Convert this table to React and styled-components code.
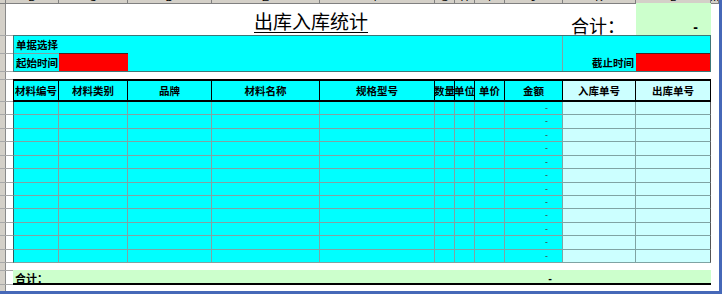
import styled, { createGlobalStyle } from "styled-components";

const GlobalStyle = createGlobalStyle`
  html, body {
    margin: 0;
    padding: 0;
    background: #ffffff;
  }
  body {
    font-family: "Noto Sans CJK SC", "Noto Sans", sans-serif;
    color: #000;
  }
`;

// column widths of the sheet, starting at the table's left edge
const WIDTHS = [46, 69, 84, 108, 115, 20, 20, 30, 58, 73, 75];
const TABLE_COLS = WIDTHS.map((w) => w + "px").join(" ");
const HEADERS = ["材料编号", "材料类别", "品牌", "材料名称", "规格型号", "数量", "单位", "单价", "金额", "入库单号", "出库单号"];
const ROW_HEIGHTS = [13, 14, 13, 14, 13, 14, 13, 13, 14, 13, 14, 13];
const HEAD_HEIGHTS = [32, 18, 18, 8, 22, ...ROW_HEIGHTS, 8, 14];
const LETTERS = ["", "B", "C", "D", "E", "F", "G", "H", "I", "J", "K", "L", "M"];

const CYAN = "#00ffff";
const LIGHT_CYAN = "#ccffff";
const LIGHT_GREEN = "#ccffcc";
const GRID = "#7fa3a3";

const Window = styled.div`
    width: 722px;
    height: 294px;
    box-sizing: border-box;
    border-right: 3px solid #4668b8;
    border-bottom: 3px solid #4668b8;
    display: flex;
    flex-direction: column;
    overflow: hidden;
    background: #fff;
`

const ColStrip = styled.div`
    display: grid;
    grid-template-columns: 6px 53px ${WIDTHS.slice(1).map((w) => w + "px").join(" ")} 1fr;
    height: 4px;
    flex-shrink: 0;
    box-sizing: border-box;
    border-bottom: 1px solid #808080;
    background: #d4d0c8;
`

const ColLetter = styled.div`
    display: flex;
    align-items: flex-end;
    justify-content: center;
    overflow: hidden;
    border-right: 1px solid #808080;
    font: 11px/11px "Liberation Sans", sans-serif;
    color: #000;
`

const Body = styled.div`
    display: flex;
    flex: 1;
    min-height: 0;
`

const RowHeads = styled.div`
    display: flex;
    flex-direction: column;
    width: 13px;
    flex-shrink: 0;
`

const RowHead = styled.div`
    height: ${(p) => (p.$h ? p.$h + "px" : "auto")};
    flex: ${(p) => (p.$h ? "none" : "1")};
    box-sizing: border-box;
    border-bottom: ${(p) => (p.$h ? "1px solid #a8a8a8" : "none")};
    background: linear-gradient(to right, #d4d0c8 0 5px, #8a8a8a 5px 6px, #ffffff 6px);
`

const Sheet = styled.div`
    display: flex;
    flex-direction: column;
    width: 698px;
`

const TitleBar = styled.div`
    display: grid;
    grid-template-columns: ${TABLE_COLS};
    height: 31px;
    flex-shrink: 0;
`

const Title = styled.div`
    grid-column: 4 / span 2;
    padding: 7px 0 0 42px;
    font-size: 19px;
    line-height: 19px;
    white-space: nowrap;
    text-decoration: underline;
    text-underline-offset: 3px;
    text-decoration-thickness: 1px;
`

const SumLabel = styled.div`
    grid-column: 10;
    padding: 12px 0 0 8px;
    font-size: 18px;
    line-height: 18px;
    white-space: nowrap;
    text-decoration: underline;
    text-underline-offset: 3px;
    text-decoration-thickness: 1px;
`

const SumBox = styled.div`
    grid-column: 11;
    margin-top: -1px;
    background: ${LIGHT_GREEN};
    display: flex;
    align-items: flex-end;
    justify-content: flex-end;
    padding: 0 13px 1px 0;
    font: bold 14px/14px "Liberation Sans", sans-serif;
`

const FilterBlock = styled.div`
    display: grid;
    grid-template-columns: 45px 69px 1fr 73px 74px;
    grid-template-rows: 17px 18px;
    height: 37px;
    flex-shrink: 0;
    box-sizing: border-box;
    border: 1px solid #3d7777;
    background: ${CYAN};
`

const FilterCell = styled.div`
    grid-column: ${(p) => p.$span || "auto"};
    display: flex;
    align-items: center;
    justify-content: ${(p) => (p.$end ? "flex-end" : "flex-start")};
    padding: 0 2px;
    box-sizing: border-box;
    border-top: ${(p) => (p.$grid ? `1px solid ${GRID}` : "none")};
    border-right: ${(p) => (p.$divider ? `1px solid ${GRID}` : "none")};
    font-size: 10.5px;
    font-weight: 700;
    white-space: nowrap;
`

const RedField = styled.div`
    background: #ff0000;
    border-top: 1px solid #4a2020;
`

const Spacer = styled.div`
    height: ${(p) => p.$h}px;
    flex-shrink: 0;
`

const HeaderRow = styled.div`
    display: grid;
    grid-template-columns: ${TABLE_COLS};
    height: 23px;
    flex-shrink: 0;
    box-sizing: border-box;
    border-top: 2px solid #000;
    border-bottom: 2px solid #000;
`

const HeadCell = styled.div`
    display: flex;
    align-items: center;
    justify-content: center;
    box-sizing: border-box;
    background: ${(p) => (p.$light ? LIGHT_CYAN : CYAN)};
    border-right: 1px solid #000;
    font-size: 10.5px;
    font-weight: 700;
    white-space: nowrap;
    &:first-child {
        border-left: 1px solid #000;
    }
`

const DataRow = styled.div`
    display: grid;
    grid-template-columns: ${TABLE_COLS};
    height: ${(p) => p.$h}px;
    flex-shrink: 0;
`

const DataCell = styled.div`
    display: flex;
    align-items: center;
    justify-content: flex-end;
    padding-right: ${(p) => (p.$amount ? "14px" : "0")};
    box-sizing: border-box;
    background: ${(p) => (p.$light ? LIGHT_CYAN : CYAN)};
    border-right: 1px solid ${GRID};
    border-bottom: 1px solid ${GRID};
    font: 9px/9px "Liberation Sans", sans-serif;
    color: #444;
    &:first-child {
        border-left: 1px solid #2f5f5f;
    }
    &:last-child {
        border-right: 1px solid #555;
    }
`

const TotalBar = styled.div`
    display: grid;
    grid-template-columns: ${TABLE_COLS};
    height: 15px;
    flex-shrink: 0;
    box-sizing: border-box;
    background: ${LIGHT_GREEN};
    border-bottom: 2px solid #000;
`

const TotalLabel = styled.div`
    grid-column: 1 / span 8;
    display: flex;
    align-items: center;
    padding-left: 2px;
    font-size: 11px;
    font-weight: 700;
`

const TotalAmount = styled.div`
    grid-column: 9;
    display: flex;
    align-items: center;
    justify-content: flex-end;
    padding-right: 11px;
    font: bold 11px/11px "Liberation Sans", sans-serif;
`

export default function App() {
    return (
        <Window>
            <GlobalStyle/>
            <ColStrip>
                {LETTERS.map((l, i) => <ColLetter key={i}>{l}</ColLetter>)}
            </ColStrip>
            <Body>
                <RowHeads>
                    {HEAD_HEIGHTS.map((h, i) => <RowHead key={i} $h={h}/>)}
                    <RowHead/>
                </RowHeads>
                <Sheet>
                    <TitleBar>
                        <Title>出库入库统计</Title>
                        <SumLabel>合计：</SumLabel>
                        <SumBox>-</SumBox>
                    </TitleBar>
                    <FilterBlock>
                        <FilterCell $span="1 / 4" $divider>单据选择</FilterCell>
                        <FilterCell $span="4 / 6"/>
                        <FilterCell $grid>起始时间</FilterCell>
                        <RedField/>
                        <FilterCell $divider/>
                        <FilterCell $end>截止时间</FilterCell>
                        <RedField/>
                    </FilterBlock>
                    <Spacer $h={7}/>
                    <HeaderRow>
                        {HEADERS.map((h, i) => <HeadCell key={h} $light={i > 8}>{h}</HeadCell>)}
                    </HeaderRow>
                    {ROW_HEIGHTS.map((h, r) => (
                        <DataRow key={r} $h={h}>
                            {HEADERS.map((_, i) => (
                                <DataCell key={i} $light={i > 8} $amount={i === 8}>
                                    {i === 8 ? "-" : null}
                                </DataCell>
                            ))}
                        </DataRow>
                    ))}
                    <Spacer $h={7}/>
                    <TotalBar>
                        <TotalLabel>合计：</TotalLabel>
                        <TotalAmount>-</TotalAmount>
                    </TotalBar>
                </Sheet>
            </Body>
        </Window>
    )
}
